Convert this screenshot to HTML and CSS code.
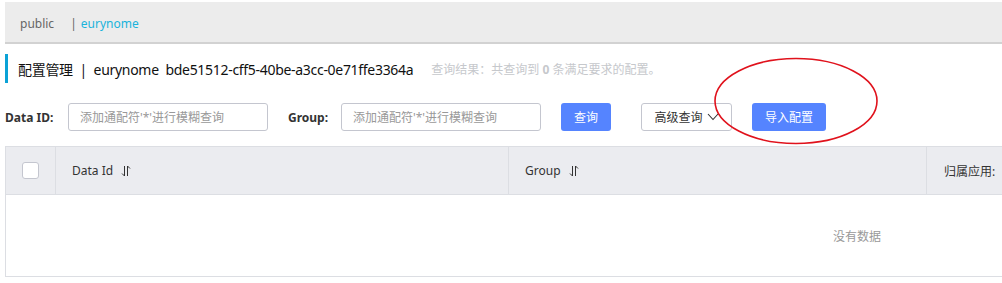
FILE: index.html
```html
<!DOCTYPE html>
<html>
    <head>
        <title>配置管理</title>
        <link rel="stylesheet" href="styles.css">
    </head>
    <body>
        <div class="page">
            <div class="ns-bar">
                <span class="ns-item">public</span>
                <span class="ns-sep">|</span>
                <span class="ns-item ns-active">eurynome</span>
            </div>

            <div class="page-title">
                <span class="title-main">配置管理 &nbsp;|&nbsp; eurynome &nbsp;bde51512-cff5-40be-a3cc-0e71ffe3364a</span>
                <span class="title-result">查询结果：共查询到 <b>0</b> 条满足要求的配置。</span>
            </div>

            <div class="search-row">
                <label class="search-label">Data ID:</label>
                <input class="search-input" placeholder="添加通配符'*'进行模糊查询">
                <label class="search-label group-label">Group:</label>
                <input class="search-input" placeholder="添加通配符'*'进行模糊查询">
                <button class="btn btn-primary btn-query">查询</button>
                <button class="btn btn-normal">高级查询
                    <svg class="arrow-down" width="12" height="8" viewBox="0 0 12 8"><path d="M1 1 L6 6.5 L11 1" fill="none" stroke="#333" stroke-width="1.1"/></svg>
                </button>
                <button class="btn btn-primary btn-import">导入配置</button>
                <svg class="mark" width="170" height="90" viewBox="0 0 170 90"><ellipse cx="85" cy="45" rx="81" ry="42.5" fill="none" stroke="#e0121c" stroke-width="1.6"/></svg>
            </div>

            <div class="table-wrap">
                <div class="table">
                    <div class="table-head">
                        <div class="cell cell-check"><span class="checkbox"></span></div>
                        <div class="cell cell-id">Data Id
                            <svg class="sort" width="10" height="12" viewBox="0 0 10 12"><path d="M3.5 1 V11 L1 8.5 M6.5 11 V1 L9 3.5" fill="none" stroke="#333" stroke-width="1"/></svg>
                        </div>
                        <div class="cell cell-group">Group
                            <svg class="sort" width="10" height="12" viewBox="0 0 10 12"><path d="M3.5 1 V11 L1 8.5 M6.5 11 V1 L9 3.5" fill="none" stroke="#333" stroke-width="1"/></svg>
                        </div>
                        <div class="cell cell-app">归属应用:</div>
                    </div>
                    <div class="table-body">没有数据</div>
                </div>
            </div>
        </div>
    </body>
</html>
```

FILE: styles.css
```css
body {
    margin: 0;
    background-color: white;
    font-family: "Noto Sans", "Noto Sans CJK SC", sans-serif;
    color: #333;
    overflow: hidden;
}

.page {
    padding: 2px 0 0 5px;
}

.ns-bar {
    box-sizing: border-box;
    height: 42px;
    background-color: #ececec;
    border-bottom: 2px solid #d2d2d2;
    display: flex;
    align-items: center;
    padding: 3px 0 0 15px;
    font-size: 12px;
}
.ns-item {
    color: #666;
}
.ns-sep {
    color: #666;
    margin: 0 4px 0 16px;
}
.ns-active {
    color: #1ab3db;
}

.page-title {
    margin-top: 10px;
    height: 29px;
    border-left: 3px solid #0ba2d6;
    display: flex;
    align-items: center;
    padding-left: 10px;
}
.title-main {
    font-size: 14px;
    color: #111;
    letter-spacing: -0.3px;
}
.title-result {
    font-size: 12px;
    color: #c6c8cc;
    margin-left: 18px;
}

.search-row {
    position: relative;
    margin-top: 20px;
    height: 28px;
    display: flex;
    align-items: center;
}
.search-label {
    font-size: 12px;
    font-weight: bold;
    color: #333;
    width: 63px;
}
.group-label {
    width: 53px;
    margin-left: 20px;
}
.search-input {
    box-sizing: border-box;
    width: 200px;
    height: 28px;
    border: 1px solid #c4c6cf;
    border-radius: 3px;
    padding: 0 11px;
    font-family: inherit;
    font-size: 12px;
    outline: none;
}
.search-input::placeholder {
    color: #999;
}

.btn {
    box-sizing: border-box;
    height: 28px;
    border-radius: 3px;
    font-family: inherit;
    font-size: 12px;
    padding: 0;
    cursor: pointer;
}
.btn-primary {
    background-color: #5584ff;
    border: none;
    color: white;
}
.btn-query {
    width: 50px;
    margin-left: 20px;
}
.btn-normal {
    width: 91px;
    margin-left: 30px;
    background-color: white;
    border: 1px solid #c4c6cf;
    color: #333;
    display: flex;
    align-items: center;
    justify-content: center;
    gap: 4px;
}
.btn-import {
    width: 74px;
    margin-left: 20px;
}
.mark {
    position: absolute;
    left: 706px;
    top: -47px;
}

.table-wrap {
    margin-top: 15px;
    overflow: hidden;
}
.table {
    width: 1702px;
    border: 1px solid #dcdee3;
    border-right: none;
}
.table-head {
    display: flex;
    height: 47px;
    background-color: #ebecf0;
    border-bottom: 1px solid #dcdee3;
}
.cell {
    display: flex;
    align-items: center;
    font-size: 12px;
    color: #333;
    border-right: 1px solid #dcdee3;
}
.cell-check {
    width: 49px;
    justify-content: center;
}
.checkbox {
    width: 15px;
    height: 15px;
    background-color: white;
    border: 1px solid #c4c6cf;
    border-radius: 3px;
}
.cell-id {
    width: 436px;
    padding-left: 16px;
}
.cell-group {
    width: 401px;
    padding-left: 16px;
}
.cell-app {
    flex: 1;
    padding-left: 17px;
    border-right: none;
}
.sort {
    margin-left: 8px;
}
.table-body {
    height: 81px;
    display: flex;
    align-items: center;
    justify-content: center;
    font-size: 12px;
    color: #999;
}
```
